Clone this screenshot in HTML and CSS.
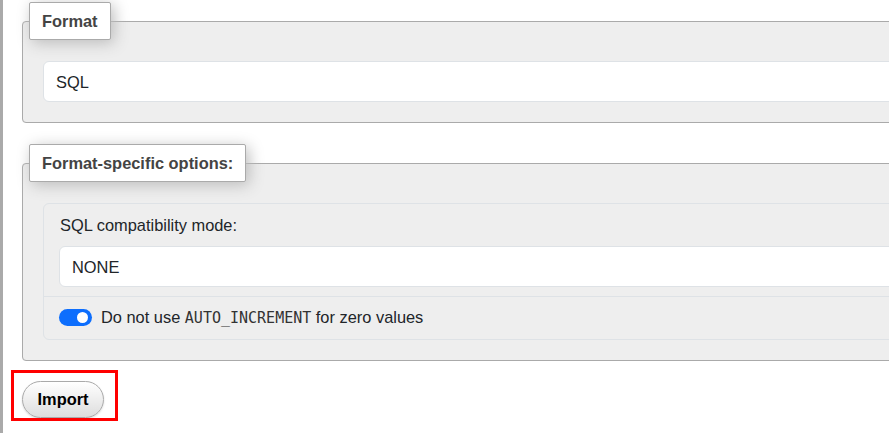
FILE: index.html
```html
<!DOCTYPE html>
<html lang="en">
<head>
<meta charset="utf-8">
<title>Import</title>
<link rel="stylesheet" href="styles.css">
</head>
<body>
<div class="page">
  <form class="import-form">
    <fieldset class="panel">
      <legend class="panel-legend">Format</legend>
      <div class="select">SQL</div>
    </fieldset>

    <fieldset class="panel panel-last">
      <legend class="panel-legend">Format-specific options:</legend>
      <div class="card">
        <div class="card-item">
          <label class="field-label">SQL compatibility mode:</label>
          <div class="select">NONE</div>
        </div>
        <div class="card-item switch-row">
          <span class="switch"><span class="knob"></span></span>
          <span class="switch-text">Do not use <code class="mono">AUTO_INCREMENT</code> for zero values</span>
        </div>
      </div>
    </fieldset>

    <div class="actions">
      <span class="btn-wrap">
        <button type="button" class="btn">Import</button>
        <span class="highlight"></span>
      </span>
    </div>
  </form>
</div>
</body>
</html>
```

FILE: styles.css
```css
html, body {
  margin: 0;
  padding: 0;
  overflow: hidden;
  background: #fff;
}

body {
  font-family: "Liberation Sans", Arial, sans-serif;
  font-size: 16.4px;
  line-height: 24px;
  color: #212529;
}

.page {
  border-left: 3px solid #aaa;
  min-height: 433px;
  box-sizing: border-box;
}

.import-form {
  padding: 2px 0 0 19px;
  width: 1100px;
}

.panel {
  margin: 0 0 21px 0;
  padding: 21px 20px 20px 20px;
  border: 1px solid #aaa;
  border-radius: 4px;
  background: #eee;
  min-width: 0;
}

.panel-last {
  margin-bottom: 20px;
}

.panel-legend {
  margin-left: -14px;
  padding: 6px 12px;
  font-weight: bold;
  color: #444;
  background: #fff;
  border: 1px solid #aaa;
  border-radius: 2px;
  box-shadow: 3px 3px 15px #bbb;
  line-height: 24px;
}

.select {
  box-sizing: border-box;
  height: 41px;
  padding: 9px 12px 8px;
  background: #fff;
  border: 1px solid #dee2e6;
  border-radius: 6px;
  line-height: 22px;
}

.card {
  border: 1px solid #dee2e6;
  border-radius: 6px;
  background: #eee;
}

.card-item {
  padding: 9px 16px 9px 15px;
}

.card-item + .card-item {
  border-top: 1px solid #dee2e6;
}

.field-label {
  display: block;
  margin-bottom: 9px;
  padding-left: 1px;
}

.switch-row {
  display: flex;
  align-items: center;
  gap: 9px;
  padding-top: 8px;
  padding-bottom: 9px;
}

.switch {
  position: relative;
  flex: none;
  width: 33px;
  height: 17px;
  border-radius: 9px;
  background: #0d6efd;
}

.knob {
  position: absolute;
  top: 3px;
  right: 4px;
  width: 11px;
  height: 11px;
  border-radius: 50%;
  background: #fff;
}

.mono {
  font-family: "DejaVu Sans Mono", "Liberation Mono", monospace;
  font-size: 15px;
  color: #333;
}

.btn {
  font-family: "Liberation Sans", Arial, sans-serif;
  font-size: 16.4px;
  font-weight: bold;
  color: #000;
  width: 82px;
  height: 37px;
  padding: 0;
  border: 1px solid #aaa;
  border-radius: 20px;
  background: linear-gradient(#fff, #ddd);
  box-shadow: 0 1px 2px rgba(0,0,0,0.15);
  cursor: pointer;
}

.btn-wrap {
  position: relative;
  display: inline-block;
  vertical-align: top;
}

.highlight {
  position: absolute;
  top: -11px;
  left: -11px;
  right: -14px;
  bottom: -3px;
  border: 3px solid #f00;
  pointer-events: none;
}
```
